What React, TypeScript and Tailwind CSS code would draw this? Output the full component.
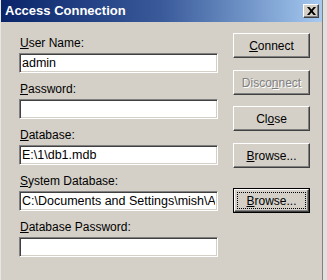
import React from "react";

const font = { fontFamily: '"Liberation Sans", Arial, sans-serif' };

const Field: React.FC<{ label: React.ReactNode; value?: string; first?: boolean }> = ({ label, value, first }) => (
    <div className={first ? "" : "mt-[9px]"}>
        <div className="h-[14px] pl-[1px] text-[12px] leading-[14px] text-black">{label}</div>
        <input
            readOnly
            value={value ?? ""}
            className="mt-[3px] block h-[20px] w-[199px] border border-t-[#808080] border-l-[#808080] border-b-white border-r-white bg-white px-[2px] text-[12.5px] text-black outline-none shadow-[inset_1px_1px_0_#404040,inset_-1px_-1px_0_#d4d0c8]"
            style={font}
        />
    </div>
);

const Btn: React.FC<{ children: React.ReactNode; disabled?: boolean; focused?: boolean; className?: string }> = ({
    children,
    disabled,
    focused,
    className,
}) => {
    if (focused) {
        return (
            <div className={"h-[25px] w-[77px] border border-black " + (className ?? "")}>
                <div className="flex h-full w-full items-center justify-center border border-t-white border-l-white border-b-[#404040] border-r-[#404040] shadow-[inset_-1px_-1px_0_#808080] p-[2px]">
                    <div className="flex h-full w-full items-center justify-center border border-dotted border-black text-[12px] leading-none text-black">
                        {children}
                    </div>
                </div>
            </div>
        );
    }
    return (
        <div
            className={
                "flex h-[25px] w-[77px] items-center justify-center border border-t-white border-l-white border-b-[#404040] border-r-[#404040] shadow-[inset_-1px_-1px_0_#808080] text-[12px] leading-none " +
                (disabled ? "text-[#808080] [text-shadow:1px_1px_0_#fff] " : "text-black ") +
                (className ?? "")
            }
        >
            {children}
        </div>
    );
};

export default function App() {
    return (
        <div className="h-[280px] w-[327px] overflow-hidden bg-[#e2e0dc]" style={font}>
            <div className="h-[280px] w-[323px] border-r border-r-[#808080] border-l border-l-[#e8e6e2] bg-[#d4d0c8]">
                <div className="flex h-[22px] items-center justify-between bg-gradient-to-r from-[#0a246a] via-[#3a5a9a] to-[#a6caf0] pl-[4px] pr-[3px]">
                    <span className="text-[13px] font-bold text-white">Access Connection</span>
                    <div className="flex h-[14px] w-[16px] items-center justify-center border border-t-white border-l-white border-b-[#404040] border-r-[#404040] bg-[#d4d0c8] shadow-[inset_-1px_-1px_0_#808080]">
                        <svg width="9" height="8" viewBox="0 0 9 8">
                            <path d="M0 0h2.4l2.1 2.5L6.6 0H9L5.7 4 9 8H6.6L4.5 5.5 2.4 8H0l3.3-4z" fill="#000" />
                        </svg>
                    </div>
                </div>
                <div className="flex">
                    <div className="ml-[18px] pt-[14px]">
                        <Field first label={<><span className="underline">U</span>ser Name:</>} value="admin" />
                        <Field label={<><span className="underline">P</span>assword:</>} />
                        <Field label={<><span className="underline">D</span>atabase:</>} value="E:\1\db1.mdb" />
                        <Field label={<><span className="underline">S</span>ystem Database:</>} value="C:\Documents and Settings\mish\Application Data\System.mdw" />
                        <Field label={<><span className="underline">D</span>atabase Password:</>} />
                    </div>
                    <div className="ml-[15px] flex flex-col pt-[11px]">
                        <Btn>
                            <span className="underline">C</span>onnect
                        </Btn>
                        <Btn disabled className="mt-[12px]">
                            Disco<span className="underline">n</span>nect
                        </Btn>
                        <Btn className="mt-[11px]">
                            Cl<span className="underline">o</span>se
                        </Btn>
                        <Btn className="mt-[12px]">
                            <span className="underline">B</span>rowse...
                        </Btn>
                        <Btn focused className="mt-[20px]">
                            <span className="underline">B</span>rowse...
                        </Btn>
                    </div>
                </div>
            </div>
        </div>
    );
}
